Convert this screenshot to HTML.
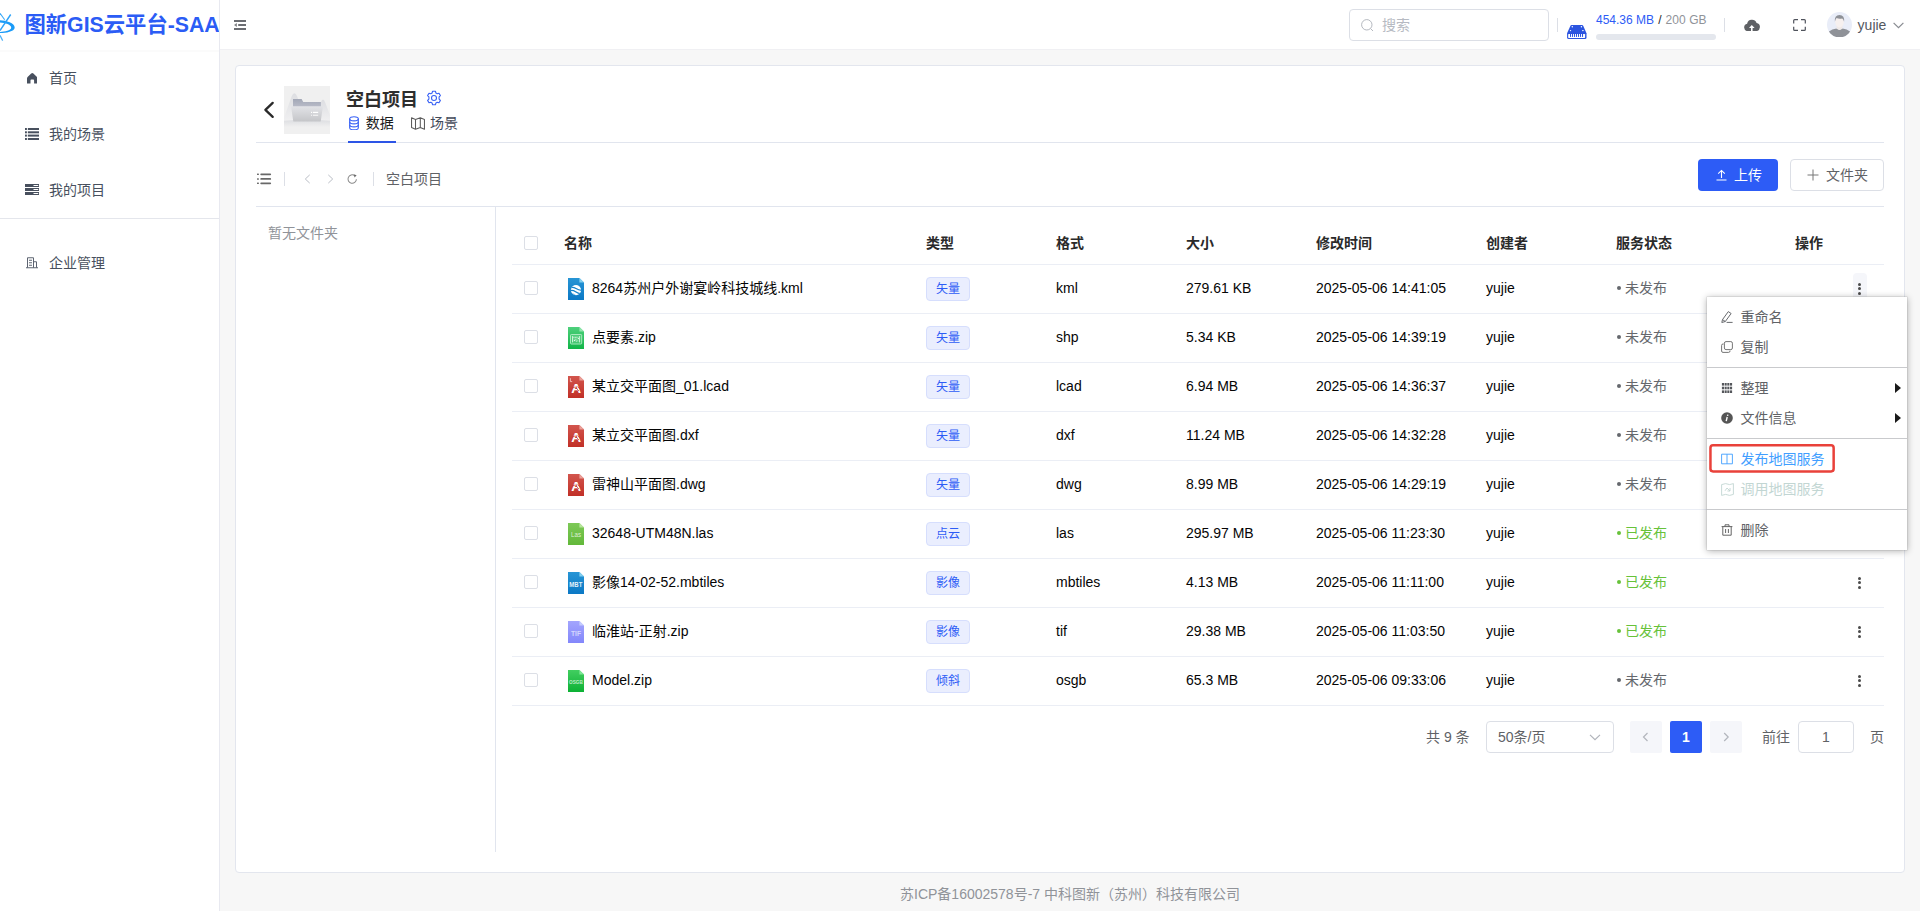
<!DOCTYPE html>
<html lang="zh-CN">
<head>
<meta charset="utf-8">
<title>图新GIS云平台-SAAS</title>
<style>
*{box-sizing:border-box;margin:0;padding:0}
html,body{width:1920px;height:911px;overflow:hidden}
body{font-family:"Liberation Sans","Noto Sans CJK SC",sans-serif;font-size:14px;color:#1f1f1f;background:#f7f7f7;position:relative}
svg{display:block}
.abs{position:absolute}
/* sidebar */
#side{position:absolute;left:0;top:0;width:220px;height:911px;background:#fff;border-right:1px solid #e8e9f0}
#logo{position:absolute;left:0;top:0;width:219px;height:52px;overflow:hidden;border-bottom:2px solid #fbfbfb}
#logo .t{position:absolute;left:24.5px;top:1px;line-height:49px;font-size:21.3px;font-weight:bold;color:#2b5cf5;white-space:nowrap;letter-spacing:0}
.mi{position:absolute;left:0;width:219px;height:56px;line-height:56px;color:#48505e;font-size:14px}
.mi span{position:absolute;left:49px;top:0}
.mi svg{position:absolute}
#sdiv{position:absolute;left:0;top:218px;width:219px;height:1px;background:#e4e6ec}
/* header */
#hdr{position:absolute;left:220px;top:0;width:1700px;height:50px;background:#fff;border-bottom:1px solid #f0f0f3}
/* card */
#card{position:absolute;left:235px;top:65px;width:1670px;height:808px;background:#fff;border:1px solid #e3e6ee;border-radius:4px}
.hl{position:absolute;height:1px;background:#e1e5ee}
.vl{position:absolute;width:1px;background:#e1e5ee}
.t14{position:absolute;font-size:14px;line-height:20px;white-space:nowrap}
/* table */
.th{position:absolute;top:233px;font-weight:bold;font-size:14px;line-height:20px;color:#2a2a2a;white-space:nowrap}
.row{position:absolute;left:512px;width:1372px;height:50px;border-bottom:1px solid #ebeef5}
.row .c{position:absolute;top:14px;line-height:20px;font-size:14px;white-space:nowrap;color:#050505}
.cb{position:absolute;left:12px;top:17px;width:14px;height:14px;border:1px solid #dcdfe6;border-radius:2px;background:#fff}
.fi{position:absolute;left:56px;top:14px;width:16px;height:22px}
.tag{position:absolute;left:414px;top:13px;width:44px;height:24px;border:1px solid #d6defd;background:#eaeefe;border-radius:4px;color:#2d5cf6;font-size:12px;line-height:23px;text-align:center}
.st{color:#65686d !important}
.st.g{color:#67c23a !important}
.dots{position:absolute;left:1346.2px;top:19.1px;width:3px}
.bl{position:absolute;left:1px;top:8px;width:4px;height:4px;border-radius:50%;background:currentColor}
.st{padding-left:9px}
.dots i{display:block;width:3px;height:3px;border-radius:50%;background:#4a4a4a;margin-bottom:1.35px}
/* popup */
#pop{position:absolute;left:1707px;top:297px;width:200px;height:253px;background:#fff;box-shadow:0 0 0 0.5px rgba(0,0,0,.12),0 1px 7px rgba(0,0,0,.32);}
#pop .it{position:absolute;left:0;width:200px;height:30px;line-height:30px;font-size:14px;color:#606266}
#pop .it span{position:absolute;left:33.4px;top:0;white-space:nowrap}
#pop .it svg{position:absolute;left:14px;top:9px}
#pop .sp{position:absolute;left:0;width:200px;height:1px;background:#c9cacd}
#pop .ar{position:absolute;left:188px;top:10px;width:0;height:0;border-left:6px solid #1a1a1a;border-top:5px solid transparent;border-bottom:5px solid transparent}
/* pagination */
.pg{position:absolute;top:721px;height:32px;line-height:32px;font-size:14px;color:#606266;white-space:nowrap}
</style>
</head>
<body>
<!-- SIDEBAR -->
<div id="side">
  <div id="logo">
    <svg class="abs" style="left:0;top:0" width="20" height="49" viewBox="0 0 20 49"><path d="M0 20.3 C6 20.5 14.9 23 14.7 27.7 C14.5 31.6 6 32.9 0 33.1 L0 31.9 C5 31.7 11 30.6 11.2 27.7 C11.4 24.9 5 22.8 0 22.6 Z" fill="#1a9bf8"/><path d="M0 13.2 L4.7 19.8" stroke="#3aa9f8" stroke-width="1.1" fill="none"/><path d="M10.7 14.5 L0 30.6" stroke="#2ea3f8" stroke-width="1.4" fill="none"/><path d="M0 35.4 L2.7 40.6" stroke="#4db2f9" stroke-width="1.2" fill="none"/></svg>
    <div class="t">图新GIS云平台-SAAS</div>
  </div>
  <div class="mi" style="top:50px"><svg style="left:26.6px;top:23px" width="10.6" height="10.6" viewBox="0 0 10.6 10.6"><path d="M5.3 0 Q5.8 0 6.4 0.6 L10 4 Q10.6 4.6 10.6 5.4 V10.6 H7.1 V7.4 Q7.1 6.6 6.3 6.6 H4.3 Q3.5 6.6 3.5 7.4 V10.6 H0 V5.4 Q0 4.6 0.6 4 L4.2 0.6 Q4.8 0 5.3 0 Z" fill="#48505e"/></svg><span>首页</span></div>
  <div class="mi" style="top:106px"><svg style="left:25px;top:22px" width="14.2" height="12" viewBox="0 0 15 12" preserveAspectRatio="none"><g fill="#48505e"><rect x="0" y="0" width="2" height="2"/><rect x="3" y="0" width="12" height="2"/><rect x="0" y="3.3" width="2" height="2"/><rect x="3" y="3.3" width="12" height="2"/><rect x="0" y="6.6" width="2" height="2"/><rect x="3" y="6.6" width="12" height="2"/><rect x="0" y="10" width="2" height="2"/><rect x="3" y="10" width="12" height="2"/></g></svg><span>我的场景</span></div>
  <div class="mi" style="top:162px"><svg style="left:25px;top:22px" width="14.2" height="11" viewBox="0 0 15 11" preserveAspectRatio="none"><g fill="#48505e"><rect x="0" y="0" width="15" height="3"/><rect x="0" y="4" width="15" height="3"/><rect x="0" y="8" width="15" height="3"/></g><g fill="#fff"><rect x="9" y="1" width="5" height="1"/><rect x="9" y="5" width="5" height="1"/><rect x="9" y="9" width="5" height="1"/></g></svg><span>我的项目</span></div>
  <div id="sdiv"></div>
  <div class="mi" style="top:235px"><svg style="left:26px;top:22px" width="12" height="11.5" viewBox="0 0 12 11"><g fill="none" stroke="#5d6471" stroke-width="1"><path d="M1.5 10.5 V0.5 H7.5 V10.5"/><path d="M7.5 4.5 H10.5 V10.5"/><path d="M0 10.5 H12"/><path d="M3 3 H6 M3 5.5 H6 M3 8 H6"/></g></svg><span>企业管理</span></div>
</div>

<!-- HEADER -->
<div id="hdr">
  <svg class="abs" style="left:14px;top:20px" width="12" height="10" viewBox="0 0 12 10"><g fill="#6b6d72"><rect x="0" y="0" width="12" height="2"/><rect x="4.2" y="4" width="7.8" height="2"/><rect x="0" y="8" width="12" height="2"/><path d="M0 5 L2.9 3 V7 Z" opacity="0.85"/></g></svg>
  <div class="abs" style="left:1129px;top:9px;width:200px;height:32px;border:1px solid #dcdfe6;border-radius:4px;background:#fff">
    <svg class="abs" style="left:11px;top:9px" width="13" height="13" viewBox="0 0 13 13"><circle cx="5.8" cy="5.8" r="5.2" fill="none" stroke="#b4b8bf" stroke-width="1"/><path d="M9.6 9.6 L12 12" stroke="#b4b8bf" stroke-width="1"/></svg>
    <div class="abs" style="left:32px;top:0;line-height:30px;font-size:14px;color:#b6bac2">搜索</div>
  </div>
  <div class="abs" style="left:1337px;top:18px;width:1px;height:14px;background:#dcdfe6"></div>
  <svg class="abs" style="left:1347px;top:25px" width="20" height="15" viewBox="0 0 20 15"><path d="M4.6 0 H15 Q15.9 0 16.3 0.9 L19.5 8.2 V12.6 Q19.5 14.1 18 14.1 H1.6 Q0.1 14.1 0.1 12.6 V8.2 L3.3 0.9 Q3.7 0 4.6 0 Z" fill="#2b54e0"/><g fill="#fff"><rect x="1.2" y="8.9" width="16.9" height="4" rx="0.6"/><circle cx="5.3" cy="1.7" r="0.7"/><circle cx="14.4" cy="1.7" r="0.7"/><circle cx="3.5" cy="5.6" r="0.7"/><ellipse cx="15.9" cy="5.6" rx="0.9" ry="0.6"/></g><g fill="#2b54e0"><rect x="3.0" y="8.9" width="1.05" height="3"/><rect x="5.0" y="8.9" width="1.05" height="3"/><rect x="7.0" y="8.9" width="1.05" height="3"/><rect x="9.0" y="8.9" width="1.05" height="3"/><rect x="11.0" y="8.9" width="1.05" height="3"/><rect x="13.0" y="8.9" width="1.05" height="3"/><rect x="15.0" y="8.9" width="1.05" height="3"/></g></svg>
  <div class="abs" style="left:1376px;top:12px;font-size:12px;line-height:17px;white-space:nowrap;color:#1f1f1f"><span style="color:#2d5cf6">454.36 MB</span><span style="margin:0 3.7px 0 4.3px">/</span><span style="color:#909399;letter-spacing:0.1px">200 GB</span></div>
  <div class="abs" style="left:1376px;top:34px;width:120px;height:6px;border-radius:3px;background:#e4e7ed"></div>
  <div class="abs" style="left:1504px;top:18px;width:1px;height:14px;background:#dcdfe6"></div>
  <svg class="abs" style="left:1524px;top:19px" width="16" height="12.4" viewBox="0 0 16 12.4"><path d="M3.9 12.2 A3.8 3.8 0 0 1 3.1 4.7 A5 5 0 0 1 12.6 3.9 A4.2 4.2 0 0 1 12 12.2 Z" fill="#5f6165"/><path d="M7.8 5.9 L10.6 9 H8.6 V12.4 H7 V9 H5 Z" fill="#fff"/></svg>
  <svg class="abs" style="left:1573px;top:19px" width="13" height="12" viewBox="0 0 13 12"><path d="M0.7 4.4 V1.5 Q0.7 0.6 1.6 0.6 H5 M8 0.6 H11.4 Q12.3 0.6 12.3 1.5 V4.4 M12.3 7.8 V10.5 Q12.3 11.4 11.4 11.4 H8 M5 11.4 H1.6 Q0.7 11.4 0.7 10.5 V7.8" fill="none" stroke="#4f535c" stroke-width="1.2"/></svg>
  <svg class="abs" style="left:1607px;top:12px" width="25" height="25.4" viewBox="0 0 25 25.4"><defs><clipPath id="avc"><ellipse cx="12.5" cy="12.7" rx="12.5" ry="12.7"/></clipPath></defs><ellipse cx="12.5" cy="12.7" rx="12.5" ry="12.7" fill="#e9edf8"/><g clip-path="url(#avc)"><path d="M2 19.5 Q5 17 9.4 16.4 L12.5 18 L15.6 16.4 Q20 17 23 19.5 L22 25.4 H3 Z" fill="#8f9298"/><path d="M9.6 12.5 H15.4 V16.6 Q12.5 19.2 9.6 16.6 Z" fill="#efe9e7"/><ellipse cx="12.5" cy="10" rx="4.3" ry="5.4" fill="#f6f0ef"/><path d="M7.9 9.8 Q7.2 3 12.5 3 Q17.8 3 17.1 9.8 Q16.6 7 15.2 6.4 Q12 7.2 9.6 6 Q8.4 7.2 7.9 9.8 Z" fill="#8e9197"/></g></svg>
  <div class="abs" style="left:1637.6px;top:1px;line-height:49px;font-size:14px;color:#54585f">yujie</div>
  <svg class="abs" style="left:1673px;top:22px" width="11" height="7" viewBox="0 0 11 7"><path d="M0.6 0.8 L5.5 5.7 L10.4 0.8" fill="none" stroke="#888b91" stroke-width="1.2"/></svg>
</div>

<!-- CARD -->
<div id="card"></div>
<!-- project head -->
<svg class="abs" style="left:262px;top:100px" width="14" height="20" viewBox="0 0 14 20"><path d="M10.7 2.9 L3.4 9.9 L10.7 16.9" fill="none" stroke="#2a2a2a" stroke-width="2.3" stroke-linecap="round" stroke-linejoin="round"/></svg>
<svg class="abs" style="left:284px;top:86px" width="46" height="48" viewBox="0 0 46 48"><defs><linearGradient id="tf1" x1="0" y1="0" x2="0" y2="1"><stop offset="0" stop-color="#e2e3e7"/><stop offset="1" stop-color="#c4c5c8"/></linearGradient><linearGradient id="tf2" x1="0" y1="0" x2="0" y2="1"><stop offset="0" stop-color="#a3a8b7"/><stop offset="1" stop-color="#b9bcc8"/></linearGradient><linearGradient id="tm" x1="0" y1="0" x2="0" y2="1"><stop offset="0" stop-color="#dddee2"/><stop offset="1" stop-color="#efeff0"/></linearGradient><linearGradient id="tg" x1="0" y1="0" x2="0" y2="1"><stop offset="0" stop-color="#dcdde1"/><stop offset="1" stop-color="#f0f0f0"/></linearGradient></defs><rect width="46" height="48" fill="#f0f0f0"/><path d="M0 32 L7.6 10.5 Q10.4 4.2 13.2 10.5 L22 34 H0 Z" fill="url(#tm)"/><path d="M30 34 L36.8 16.5 Q39 10.6 41.2 16.5 L46 29 V34 Z" fill="url(#tm)"/><path d="M0 34.8 Q23 32.6 46 34.8 V41 H0 Z" fill="url(#tg)"/><path d="M9 13.1 H17.6 L19.2 16 H36.9 V21 H9 Z" fill="url(#tf2)"/><path d="M7.6 20.3 H38.4 Q38.9 20.3 38.8 21 L36.8 35 Q36.7 35.6 36 35.6 H10 Q9.3 35.6 9.2 35 L7.2 21 Q7.1 20.3 7.6 20.3 Z" fill="url(#tf1)"/><g fill="#fff"><rect x="27" y="25.8" width="1.1" height="1.2"/><rect x="29" y="25.8" width="5.2" height="1.2"/></g><g fill="#fff" opacity="0.7"><rect x="27" y="28.7" width="1.1" height="1.2"/><rect x="29" y="28.7" width="5.2" height="1.2"/></g></svg>
<div class="abs" style="left:346px;top:87px;font-size:18px;line-height:26px;font-weight:bold;color:#2e2e2e;white-space:nowrap">空白项目</div>
<svg class="abs" style="left:426px;top:90px" width="16" height="16" viewBox="0 0 16 16"><g fill="none" stroke="#3a62f5" stroke-width="1.1" stroke-linejoin="round"><path d="M6.6 1.2 H9.4 L9.9 3 L11.2 3.7 L13 3.2 L14.4 5.6 L13.1 6.9 V9.1 L14.4 10.4 L13 12.8 L11.2 12.3 L9.9 13 L9.4 14.8 H6.6 L6.1 13 L4.8 12.3 L3 12.8 L1.6 10.4 L2.9 9.1 V6.9 L1.6 5.6 L3 3.2 L4.8 3.7 L6.1 3 Z"/><circle cx="8" cy="8" r="2.5"/></g></svg>
<!-- tabs -->
<svg class="abs" style="left:349px;top:115.5px" width="10" height="14.5" viewBox="0 0 10 14.5"><g fill="none" stroke="#3a62f5" stroke-width="1.15"><path d="M0.7 2.8 V11.7 C0.7 12.9 2.6 13.8 5 13.8 C7.4 13.8 9.3 12.9 9.3 11.7 V2.8"/><ellipse cx="5" cy="2.8" rx="4.3" ry="2.1"/><path d="M0.7 5.8 C0.7 7 2.6 7.9 5 7.9 C7.4 7.9 9.3 7 9.3 5.8"/><path d="M0.7 8.8 C0.7 10 2.6 10.9 5 10.9 C7.4 10.9 9.3 10 9.3 8.8"/></g></svg>
<div class="t14" style="left:365.7px;top:113px;color:#1c1c1c">数据</div>
<svg class="abs" style="left:411px;top:116.5px" width="14" height="13" viewBox="0 0 14 13"><path d="M0.55 0.8 L4.5 2.4 L9.3 0.8 L13.45 2.4 V12.2 L9.3 10.4 L4.5 12.2 L0.55 10.4 Z M4.5 2.4 V12.2 M9.3 0.8 V10.4" fill="none" stroke="#5a5a5a" stroke-width="1.05" stroke-linejoin="round"/></svg>
<div class="t14" style="left:430px;top:113px;color:#434a59">场景</div>
<div class="hl" style="left:256px;top:142px;width:1628px"></div>
<div class="abs" style="left:348px;top:141px;width:48px;height:2px;background:#2d55e6"></div>
<!-- toolbar -->
<svg class="abs" style="left:257px;top:173px" width="15" height="12" viewBox="0 0 15 12"><g fill="#686868"><rect x="0" y="0.6" width="1.9" height="1.5" rx="0.5"/><rect x="3.3" y="0.5" width="10.8" height="1.7" rx="0.85"/><rect x="0" y="5.2" width="1.9" height="1.5" rx="0.5"/><rect x="3.3" y="5.1" width="10.8" height="1.7" rx="0.85"/><rect x="0" y="9.6" width="1.9" height="1.5" rx="0.5"/><rect x="3.3" y="9.5" width="10.8" height="1.7" rx="0.85"/></g></svg>
<div class="vl" style="left:284px;top:172px;height:14px;background:#dcdfe6"></div>
<svg class="abs" style="left:304px;top:174px" width="7" height="10" viewBox="0 0 7 10"><path d="M5.7 0.9 L1.3 5 L5.7 9.1" fill="none" stroke="#b9bdc5" stroke-width="1"/></svg>
<svg class="abs" style="left:327px;top:174px" width="7" height="10" viewBox="0 0 7 10"><path d="M1.3 0.9 L5.7 5 L1.3 9.1" fill="none" stroke="#b9bdc5" stroke-width="1"/></svg>
<svg class="abs" style="left:346px;top:173px" width="12" height="12" viewBox="0 0 12 12"><path d="M10.4 6.2 A4.2 4.2 0 1 1 8.6 2.6" fill="none" stroke="#8a8a8a" stroke-width="1.05"/><path d="M7.6 1.2 L10.6 2.2 L8.6 4.4 Z" fill="#6a6a6a"/></svg>
<div class="vl" style="left:373px;top:172px;height:14px;background:#dcdfe6"></div>
<div class="t14" style="left:386px;top:169px;color:#606266">空白项目</div>
<div class="abs" style="left:1698px;top:159px;width:80px;height:32px;border-radius:4px;background:#2d5cf6"></div>
<svg class="abs" style="left:1716px;top:169px" width="11" height="12" viewBox="0 0 11 12"><path d="M5.5 9 V1.6 M2.2 4.6 L5.5 1.4 L8.8 4.6 M0.5 11 H10.5" fill="none" stroke="#fff" stroke-width="1.1"/></svg>
<div class="t14" style="left:1734px;top:165px;color:#fff">上传</div>
<div class="abs" style="left:1790px;top:159px;width:94px;height:32px;border-radius:4px;background:#fff;border:1px solid #dcdfe6"></div>
<svg class="abs" style="left:1807px;top:169px" width="12" height="12" viewBox="0 0 12 12"><path d="M6 0.5 V11.5 M0.5 6 H11.5" fill="none" stroke="#777" stroke-width="1"/></svg>
<div class="t14" style="left:1826px;top:165px;color:#606266">文件夹</div>
<div class="hl" style="left:256px;top:206px;width:1628px"></div>
<div class="vl" style="left:495px;top:206px;height:646px"></div>
<div class="t14" style="left:268px;top:223px;color:#909399">暂无文件夹</div>
<div class="cb" style="left:524px;top:236px"></div>
<div class="th" style="left:564px">名称</div>
<div class="th" style="left:926px">类型</div>
<div class="th" style="left:1056px">格式</div>
<div class="th" style="left:1186px">大小</div>
<div class="th" style="left:1316px">修改时间</div>
<div class="th" style="left:1486px">创建者</div>
<div class="th" style="left:1616px">服务状态</div>
<div class="th" style="left:1795px">操作</div>
<div class="hl" style="left:512px;top:264px;width:1372px;background:#ebeef5"></div>
<div class="row" style="top:264px"><div class="cb"></div><svg class="fi" viewBox="0 0 16 22"><defs><linearGradient id="fic0" x1="0" y1="0" x2="0" y2="1"><stop offset="0" stop-color="#2795d5"/><stop offset="1" stop-color="#0b78c5"/></linearGradient></defs><path d="M0 0 H11.4 L16 4.6 V22 H0 Z" fill="url(#fic0)"/><path d="M11.4 0 L16 4.6 H11.4 Z" fill="#82cfef"/><defs><clipPath id="gc0"><circle cx="8" cy="12.1" r="5.1"/></clipPath></defs><circle cx="8" cy="12.1" r="5.1" fill="#fff"/><g clip-path="url(#gc0)" fill="none" stroke="#1482cb" stroke-width="1.25"><path d="M2.6 9.6 Q5.4 8.9 8 10.6 T13.6 12.4"/><path d="M2.2 12.6 Q5 12 7.6 13.8 T13 15.8"/><path d="M9.6 7.2 Q11.4 7.6 12.8 9.4" stroke-width="0.7" opacity="0.55"/><path d="M3.6 15.6 Q5.6 15.6 7.4 16.9" stroke-width="0.7" opacity="0.6"/></g></svg><div class="c" style="left:80px">8264苏州户外谢宴岭科技城线.kml</div><div class="tag">矢量</div><div class="c" style="left:544px">kml</div><div class="c" style="left:674px">279.61 KB</div><div class="c" style="left:804px">2025-05-06 14:41:05</div><div class="c" style="left:974px">yujie</div><div class="c st" style="left:1104px"><b class="bl"></b>未发布</div><div class="abs" style="left:1341px;top:9px;width:14px;height:32px;border-radius:4px;background:#f5f6fa"></div><div class="dots"><i></i><i></i><i></i></div></div>
<div class="row" style="top:313px"><div class="cb"></div><svg class="fi" viewBox="0 0 16 22"><defs><linearGradient id="fic1" x1="0" y1="0" x2="0" y2="1"><stop offset="0" stop-color="#4ed07c"/><stop offset="1" stop-color="#11b547"/></linearGradient></defs><path d="M0 0 H11.4 L16 4.6 V22 H0 Z" fill="url(#fic1)"/><path d="M11.4 0 L16 4.6 H11.4 Z" fill="#8fe6ab"/><rect x="2.5" y="7.5" width="11.2" height="9.5" rx="0.9" fill="#fff" fill-opacity="0.12" stroke="#c4f2d3" stroke-width="0.8"/><rect x="4.3" y="9.2" width="7.6" height="6.1" fill="#fff" fill-opacity="0.15"/><path d="M4.5 9.1 V15.4 M11.6 9.1 V15.4" stroke="#d9f8e3" stroke-width="0.9"/><g fill="#e4fbeb"><circle cx="5.9" cy="10.3" r="0.55"/><circle cx="7.4" cy="10.3" r="0.5"/><circle cx="8.9" cy="10.3" r="0.55"/><circle cx="10.4" cy="11.4" r="0.6"/><circle cx="6.6" cy="13.4" r="0.7"/><circle cx="7.9" cy="12.2" r="0.5"/><circle cx="9" cy="13.8" r="0.5"/><circle cx="8.6" cy="14.6" r="0.45"/></g></svg><div class="c" style="left:80px">点要素.zip</div><div class="tag">矢量</div><div class="c" style="left:544px">shp</div><div class="c" style="left:674px">5.34 KB</div><div class="c" style="left:804px">2025-05-06 14:39:19</div><div class="c" style="left:974px">yujie</div><div class="c st" style="left:1104px"><b class="bl"></b>未发布</div><div class="dots"><i></i><i></i><i></i></div></div>
<div class="row" style="top:362px"><div class="cb"></div><svg class="fi" viewBox="0 0 16 22"><defs><linearGradient id="fic2" x1="0" y1="0" x2="0" y2="1"><stop offset="0" stop-color="#d2554d"/><stop offset="1" stop-color="#c13027"/></linearGradient></defs><path d="M0 0 H11.4 L16 4.6 V22 H0 Z" fill="url(#fic2)"/><path d="M11.4 0 L16 4.6 H11.4 Z" fill="#ea9f98"/><path d="M2.4 2.2 V5.6 H4.2" fill="none" stroke="#f4d0cc" stroke-width="0.8"/><text x="8.2" y="16.8" font-size="13.6" font-weight="bold" text-anchor="middle" fill="#fff" font-family="Liberation Sans,sans-serif">A</text><path d="M4 12.2 L7 11 M9.4 10.6 L12.6 13.4 M8.6 12.6 L11 15" stroke="#c13027" stroke-width="0.8" fill="none" opacity="0.85"/></svg><div class="c" style="left:80px">某立交平面图_01.lcad</div><div class="tag">矢量</div><div class="c" style="left:544px">lcad</div><div class="c" style="left:674px">6.94 MB</div><div class="c" style="left:804px">2025-05-06 14:36:37</div><div class="c" style="left:974px">yujie</div><div class="c st" style="left:1104px"><b class="bl"></b>未发布</div><div class="dots"><i></i><i></i><i></i></div></div>
<div class="row" style="top:411px"><div class="cb"></div><svg class="fi" viewBox="0 0 16 22"><defs><linearGradient id="fic3" x1="0" y1="0" x2="0" y2="1"><stop offset="0" stop-color="#d2554d"/><stop offset="1" stop-color="#c13027"/></linearGradient></defs><path d="M0 0 H11.4 L16 4.6 V22 H0 Z" fill="url(#fic3)"/><path d="M11.4 0 L16 4.6 H11.4 Z" fill="#ea9f98"/><text x="8.2" y="16.8" font-size="13.6" font-weight="bold" text-anchor="middle" fill="#fff" font-family="Liberation Sans,sans-serif">A</text><path d="M4 12.2 L7 11 M9.4 10.6 L12.6 13.4 M8.6 12.6 L11 15" stroke="#c13027" stroke-width="0.8" fill="none" opacity="0.85"/></svg><div class="c" style="left:80px">某立交平面图.dxf</div><div class="tag">矢量</div><div class="c" style="left:544px">dxf</div><div class="c" style="left:674px">11.24 MB</div><div class="c" style="left:804px">2025-05-06 14:32:28</div><div class="c" style="left:974px">yujie</div><div class="c st" style="left:1104px"><b class="bl"></b>未发布</div><div class="dots"><i></i><i></i><i></i></div></div>
<div class="row" style="top:460px"><div class="cb"></div><svg class="fi" viewBox="0 0 16 22"><defs><linearGradient id="fic4" x1="0" y1="0" x2="0" y2="1"><stop offset="0" stop-color="#d2554d"/><stop offset="1" stop-color="#c13027"/></linearGradient></defs><path d="M0 0 H11.4 L16 4.6 V22 H0 Z" fill="url(#fic4)"/><path d="M11.4 0 L16 4.6 H11.4 Z" fill="#ea9f98"/><text x="8.2" y="16.8" font-size="13.6" font-weight="bold" text-anchor="middle" fill="#fff" font-family="Liberation Sans,sans-serif">A</text><path d="M4 12.2 L7 11 M9.4 10.6 L12.6 13.4 M8.6 12.6 L11 15" stroke="#c13027" stroke-width="0.8" fill="none" opacity="0.85"/></svg><div class="c" style="left:80px">雷神山平面图.dwg</div><div class="tag">矢量</div><div class="c" style="left:544px">dwg</div><div class="c" style="left:674px">8.99 MB</div><div class="c" style="left:804px">2025-05-06 14:29:19</div><div class="c" style="left:974px">yujie</div><div class="c st" style="left:1104px"><b class="bl"></b>未发布</div><div class="dots"><i></i><i></i><i></i></div></div>
<div class="row" style="top:509px"><div class="cb"></div><svg class="fi" viewBox="0 0 16 22"><defs><linearGradient id="fic5" x1="0" y1="0" x2="0" y2="1"><stop offset="0" stop-color="#7dc957"/><stop offset="1" stop-color="#62b83a"/></linearGradient></defs><path d="M0 0 H11.4 L16 4.6 V22 H0 Z" fill="url(#fic5)"/><path d="M11.4 0 L16 4.6 H11.4 Z" fill="#b7e59c"/><text x="3" y="14.4" font-size="7.6" textLength="10" lengthAdjust="spacingAndGlyphs" fill="#fff" fill-opacity="0.78" font-family="Liberation Sans,sans-serif">Las</text></svg><div class="c" style="left:80px">32648-UTM48N.las</div><div class="tag">点云</div><div class="c" style="left:544px">las</div><div class="c" style="left:674px">295.97 MB</div><div class="c" style="left:804px">2025-05-06 11:23:30</div><div class="c" style="left:974px">yujie</div><div class="c st g" style="left:1104px"><b class="bl"></b>已发布</div><div class="dots"><i></i><i></i><i></i></div></div>
<div class="row" style="top:558px"><div class="cb"></div><svg class="fi" viewBox="0 0 16 22"><defs><linearGradient id="fic6" x1="0" y1="0" x2="0" y2="1"><stop offset="0" stop-color="#2795d5"/><stop offset="1" stop-color="#0b78c5"/></linearGradient></defs><path d="M0 0 H11.4 L16 4.6 V22 H0 Z" fill="url(#fic6)"/><path d="M11.4 0 L16 4.6 H11.4 Z" fill="#82cfef"/><text x="1.3" y="14.7" font-size="7.4" font-weight="bold" textLength="13" lengthAdjust="spacingAndGlyphs" fill="#fff" fill-opacity="0.9" font-family="Liberation Sans,sans-serif">MBT</text></svg><div class="c" style="left:80px">影像14-02-52.mbtiles</div><div class="tag">影像</div><div class="c" style="left:544px">mbtiles</div><div class="c" style="left:674px">4.13 MB</div><div class="c" style="left:804px">2025-05-06 11:11:00</div><div class="c" style="left:974px">yujie</div><div class="c st g" style="left:1104px"><b class="bl"></b>已发布</div><div class="dots"><i></i><i></i><i></i></div></div>
<div class="row" style="top:607px"><div class="cb"></div><svg class="fi" viewBox="0 0 16 22"><defs><linearGradient id="fic7" x1="0" y1="0" x2="0" y2="1"><stop offset="0" stop-color="#a3a5fd"/><stop offset="1" stop-color="#8387fb"/></linearGradient></defs><path d="M0 0 H11.4 L16 4.6 V22 H0 Z" fill="url(#fic7)"/><path d="M11.4 0 L16 4.6 H11.4 Z" fill="#c4ccfe"/><text x="3" y="14.7" font-size="7.4" font-weight="bold" textLength="10" lengthAdjust="spacingAndGlyphs" fill="#fff" fill-opacity="0.62" font-family="Liberation Sans,sans-serif">TIF</text></svg><div class="c" style="left:80px">临淮站-正射.zip</div><div class="tag">影像</div><div class="c" style="left:544px">tif</div><div class="c" style="left:674px">29.38 MB</div><div class="c" style="left:804px">2025-05-06 11:03:50</div><div class="c" style="left:974px">yujie</div><div class="c st g" style="left:1104px"><b class="bl"></b>已发布</div><div class="dots"><i></i><i></i><i></i></div></div>
<div class="row" style="top:656px"><div class="cb"></div><svg class="fi" viewBox="0 0 16 22"><defs><linearGradient id="fic8" x1="0" y1="0" x2="0" y2="1"><stop offset="0" stop-color="#42ce60"/><stop offset="1" stop-color="#0cb134"/></linearGradient></defs><path d="M0 0 H11.4 L16 4.6 V22 H0 Z" fill="url(#fic8)"/><path d="M11.4 0 L16 4.6 H11.4 Z" fill="#7ee797"/><text x="1.1" y="14.4" font-size="6" font-weight="bold" textLength="13.8" lengthAdjust="spacingAndGlyphs" fill="#fff" fill-opacity="0.7" font-family="Liberation Sans,sans-serif">OSGB</text></svg><div class="c" style="left:80px">Model.zip</div><div class="tag">倾斜</div><div class="c" style="left:544px">osgb</div><div class="c" style="left:674px">65.3 MB</div><div class="c" style="left:804px">2025-05-06 09:33:06</div><div class="c" style="left:974px">yujie</div><div class="c st" style="left:1104px"><b class="bl"></b>未发布</div><div class="dots"><i></i><i></i><i></i></div></div>
<div class="pg" style="left:1426px">共 9 条</div>
<div class="abs" style="left:1486px;top:721px;width:128px;height:32px;border:1px solid #dcdfe6;border-radius:4px;background:#fff"></div>
<div class="pg" style="left:1498px">50条/页</div>
<svg class="abs" style="left:1589px;top:734px" width="12" height="7" viewBox="0 0 12 7"><path d="M1 0.9 L6 5.6 L11 0.9" fill="none" stroke="#b0b3ba" stroke-width="1.2"/></svg>
<div class="abs" style="left:1630px;top:721px;width:32px;height:32px;border-radius:2px;background:#f5f6fa"></div>
<svg class="abs" style="left:1642px;top:732px" width="7" height="10" viewBox="0 0 7 10"><path d="M5.5 1 L1.5 5 L5.5 9" fill="none" stroke="#b2b5bc" stroke-width="1.2"/></svg>
<div class="abs" style="left:1670px;top:721px;width:32px;height:32px;border-radius:2px;background:#2d5cf6;color:#fff;font-weight:bold;font-size:14px;line-height:32px;text-align:center">1</div>
<div class="abs" style="left:1710px;top:721px;width:32px;height:32px;border-radius:2px;background:#f5f6fa"></div>
<svg class="abs" style="left:1723px;top:732px" width="7" height="10" viewBox="0 0 7 10"><path d="M1.2 1 L5.2 5 L1.2 9" fill="none" stroke="#b2b5bc" stroke-width="1.2"/></svg>
<div class="pg" style="left:1762px">前往</div>
<div class="abs" style="left:1798px;top:721px;width:56px;height:32px;border:1px solid #dcdfe6;border-radius:4px;background:#fff;line-height:30px;text-align:center;font-size:14px;color:#606266">1</div>
<div class="pg" style="left:1870px">页</div>
<div id="pop">
<div class="it" style="top:5px"><svg width="12" height="12" viewBox="0 0 12 12"><path d="M7.3 0.6 L10.1 2.5 L4.3 10.5 L0.8 11.5 L1.5 8.6 Z M1.5 8.6 L4.3 10.5 M5.6 11.4 H11.6" fill="none" stroke="#606266" stroke-width="0.95" stroke-linejoin="round"/></svg><span>重命名</span></div>
<div class="it" style="top:35px"><svg width="12" height="12" viewBox="0 0 12 12"><rect x="3.4" y="0.6" width="8" height="8" rx="1.6" fill="none" stroke="#666" stroke-width="0.9"/><path d="M2.6 3 H2 Q0.6 3 0.6 4.4 V10 Q0.6 11.4 2 11.4 H7.6 Q9 11.4 9 10 V9.6" fill="none" stroke="#666" stroke-width="0.9"/></svg><span>复制</span></div>
<div class="sp" style="top:70px"></div>
<div class="it" style="top:76px"><svg width="12" height="12" viewBox="0 0 12 12"><g fill="#55575c"><rect x="0.9" y="1.0" width="2.1" height="2.6"/><rect x="3.6" y="1.0" width="2.1" height="2.6"/><rect x="6.3" y="1.0" width="2.1" height="2.6"/><rect x="9.0" y="1.0" width="2.1" height="2.6"/><rect x="0.9" y="4.7" width="2.1" height="2.6"/><rect x="3.6" y="4.7" width="2.1" height="2.6"/><rect x="6.3" y="4.7" width="2.1" height="2.6"/><rect x="9.0" y="4.7" width="2.1" height="2.6"/><rect x="0.9" y="8.4" width="2.1" height="2.6"/><rect x="3.6" y="8.4" width="2.1" height="2.6"/><rect x="6.3" y="8.4" width="2.1" height="2.6"/><rect x="9.0" y="8.4" width="2.1" height="2.6"/></g></svg><span>整理</span><i class="ar"></i></div>
<div class="it" style="top:106px"><svg width="12" height="12" viewBox="0 0 12 12"><circle cx="6" cy="6" r="5.8" fill="#555"/><path d="M6.9 2.6 L6.5 3.9 M6.2 5 L5.2 9.2" stroke="#fff" stroke-width="1.4"/></svg><span>文件信息</span><i class="ar"></i></div>
<div class="sp" style="top:141px"></div>
<svg class="abs" style="left:1px;top:146px" width="130" height="32" viewBox="0 0 130 32"><rect x="2.45" y="2.35" width="123.2" height="26.1" rx="2.6" fill="none" stroke="#e9413a" stroke-width="2.5"/></svg>
<div class="it" style="top:147px;color:#409eff"><svg width="12" height="12" viewBox="0 0 12 12"><path d="M0.6 1.2 H11.4 V10.8 H0.6 Z M6 1.2 V10.8" fill="none" stroke="#409eff" stroke-width="0.9" stroke-linejoin="round"/></svg><span>发布地图服务</span></div>
<div class="it" style="top:177px;color:#c2d6d3"><svg width="13" height="13" viewBox="0 0 13 13"><path d="M0.6 1.6 L4.6 0.6 L8.6 1.6 L12.4 0.6 V11.4 L8.6 12.4 L4.6 11.4 L0.6 12.4 Z M4 7.8 L6 5 L9 8 M9 5 V8 H6.4" fill="none" stroke="#c2d6d3" stroke-width="0.9" stroke-linejoin="round"/></svg><span>调用地图服务</span></div>
<div class="sp" style="top:212px"></div>
<div class="it" style="top:218px"><svg width="12" height="12" viewBox="0 0 12 12"><path d="M0.6 2.6 H11.4 M4 2.4 V0.8 H8 V2.4 M1.8 2.8 V11.2 H10.2 V2.8 M4.6 5 V9 M7.4 5 V9" fill="none" stroke="#555" stroke-width="0.9"/></svg><span>删除</span></div>
</div>

<!-- FOOTER -->
<div class="abs" style="left:220px;top:884px;width:1700px;text-align:center;font-size:14px;line-height:20px;color:#909399">苏ICP备16002578号-7 中科图新（苏州）科技有限公司</div>
</body>
</html>
